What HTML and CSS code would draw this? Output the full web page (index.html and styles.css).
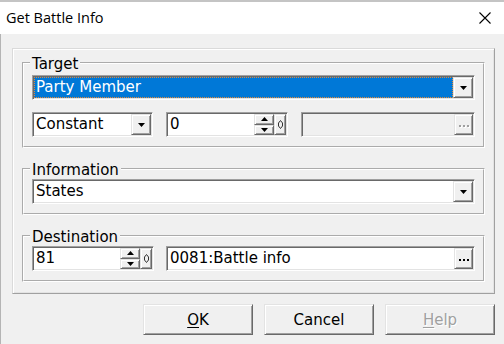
FILE: index.html
```html
<!DOCTYPE html>
<html>
<head>
<meta charset="utf-8">
<link rel="stylesheet" href="styles.css">
</head>
<body>
<div class="window">
  <div class="titlebar">
    <span class="title">Get Battle Info</span>
    <svg class="close" width="12" height="12" viewBox="0 0 12 12"><path d="M0.5 0.5 L11.5 11.5 M11.5 0.5 L0.5 11.5" stroke="#000" stroke-width="1.1" fill="none"/></svg>
  </div>
  <div class="main">
    <div class="panel">
      <fieldset class="group group-target">
        <legend>Target</legend>
        <div class="box">
          <div class="value selected">Party Member</div>
          <div class="btn drop"><svg width="7" height="4" viewBox="0 0 7 4"><polygon points="0,0 7,0 3.5,4" fill="#000"/></svg></div>
        </div>
        <div class="row">
          <div class="box w-const">
            <div class="value">Constant</div>
            <div class="btn drop"><svg width="7" height="4" viewBox="0 0 7 4"><polygon points="0,0 7,0 3.5,4" fill="#000"/></svg></div>
          </div>
          <div class="box w-spin">
            <div class="value">0</div>
            <div class="spins">
              <div class="btn half"><svg width="7" height="4" viewBox="0 0 7 4"><polygon points="0,4 7,4 3.5,0" fill="#000"/></svg></div>
              <div class="btn half"><svg width="7" height="4" viewBox="0 0 7 4"><polygon points="0,0 7,0 3.5,4" fill="#000"/></svg></div>
            </div>
            <div class="btn narrow"><svg width="5" height="9" viewBox="0 0 5 9"><path d="M2.5 0.5 L4.5 3 L4.5 6 L2.5 8.5 L0.5 6 L0.5 3 Z" stroke="#333" stroke-width="1" fill="none"/></svg></div>
          </div>
          <div class="box disabled grow">
            <div class="value"></div>
            <div class="btn dots dim"><i></i><i></i><i></i></div>
          </div>
        </div>
      </fieldset>
      <fieldset class="group spaced">
        <legend>Information</legend>
        <div class="box">
          <div class="value">States</div>
          <div class="btn drop"><svg width="7" height="4" viewBox="0 0 7 4"><polygon points="0,0 7,0 3.5,4" fill="#000"/></svg></div>
        </div>
      </fieldset>
      <fieldset class="group spaced">
        <legend>Destination</legend>
        <div class="row row-dest">
          <div class="box w-spin">
            <div class="value">81</div>
            <div class="spins">
              <div class="btn half"><svg width="7" height="4" viewBox="0 0 7 4"><polygon points="0,4 7,4 3.5,0" fill="#000"/></svg></div>
              <div class="btn half"><svg width="7" height="4" viewBox="0 0 7 4"><polygon points="0,0 7,0 3.5,4" fill="#000"/></svg></div>
            </div>
            <div class="btn narrow"><svg width="5" height="9" viewBox="0 0 5 9"><path d="M2.5 0.5 L4.5 3 L4.5 6 L2.5 8.5 L0.5 6 L0.5 3 Z" stroke="#333" stroke-width="1" fill="none"/></svg></div>
          </div>
          <div class="box grow">
            <div class="value">0081:Battle info</div>
            <div class="btn dots"><i></i><i></i><i></i></div>
          </div>
        </div>
      </fieldset>
    </div>
    <div class="buttons">
      <div class="button"><span><u>O</u>K</span></div>
      <div class="button"><span>Cancel</span></div>
      <div class="button disabled-text"><span><u>H</u>elp</span></div>
    </div>
  </div>
</div>
</body>
</html>
```
FILE: styles.css
```css
html, body {
  margin: 0;
  padding: 0;
}
body {
  width: 504px;
  height: 344px;
  overflow: hidden;
  background: #f0f0f0;
  font-family: "DejaVu Sans", sans-serif;
  font-size: 15px;
  color: #000;
}
.window {
  width: 504px;
  height: 344px;
  display: flex;
  flex-direction: column;
}
.titlebar {
  box-sizing: border-box;
  height: 34px;
  border-top: 2px solid #c4c4c4;
  background: #fff;
  display: flex;
  align-items: center;
  justify-content: space-between;
  padding: 0 13px 2px 6px;
  font-family: "Segoe UI", "Open Sans", sans-serif;
  font-size: 14.5px;
}
.close {
  display: block;
  margin-top: 2px;
}
.main {
  flex: 1;
  border-left: 1px solid #b4b4b4;
}
.panel {
  box-sizing: border-box;
  width: 483px;
  margin: 14px 0 0 11px;
  padding: 4px 9px 11px 9px;
  border: 1px solid;
  border-color: #dadada #a0a0a0 #a0a0a0 #dadada;
  box-shadow: inset 1px 1px 0 #fff, inset -1px -1px 0 #e3e3e3;
}
.group {
  margin: 0;
  padding: 0 8px 9px 8px;
  border: 2px groove #fff;
  min-width: 0;
}
.group-target {
  padding-top: 2px;
}
.spaced {
  margin-top: 11px;
}
.group legend {
  padding: 2px 2px 0 2px;
  margin-left: -2px;
  line-height: 18px;
}
.row {
  display: flex;
  gap: 13px;
  margin-top: 12px;
}
.row-dest {
  margin-top: 0;
  gap: 12px;
}
.box {
  box-sizing: border-box;
  height: 25px;
  display: flex;
  padding: 1px;
  border: 1px solid;
  border-color: #a0a0a0 #fff #fff #a0a0a0;
  box-shadow: inset 1px 1px 0 #696969, inset -1px -1px 0 #e3e3e3;
  background: #fff;
}
.w-const {
  width: 121px;
}
.w-spin {
  width: 122px;
}
.grow {
  flex: 1;
}
.disabled {
  background: #f0f0f0;
}
.value {
  flex: 1;
  min-width: 0;
  padding-left: 2px;
  line-height: 21px;
  white-space: nowrap;
  overflow: hidden;
}
.value.selected {
  background: #0078d7;
  color: #fff;
  border: 1px dotted #e08a3c;
  padding-left: 1px;
  line-height: 19px;
}
.btn {
  box-sizing: border-box;
  background: #f0f0f0;
  border: 1px solid;
  border-color: #e3e3e3 #696969 #696969 #e3e3e3;
  box-shadow: inset 1px 1px 0 #fff, inset -1px -1px 0 #a0a0a0;
  display: flex;
  align-items: center;
  justify-content: center;
}
.btn svg {
  display: block;
}
.drop {
  width: 20px;
}
.spins {
  width: 20px;
  display: flex;
  flex-direction: column;
}
.half {
  flex: 1;
}
.narrow {
  width: 12px;
}
.dots {
  width: 19px;
  gap: 2px;
  padding-top: 3px;
}
.dots i {
  display: block;
  width: 2px;
  height: 2px;
  background: #000;
}
.dots.dim i {
  background: #a0a0a0;
  box-shadow: 1px 1px 0 #fff;
}
.buttons {
  display: flex;
  justify-content: flex-end;
  gap: 11px;
  margin-top: 10px;
  padding-right: 9px;
}
.button {
  box-sizing: border-box;
  width: 110px;
  height: 31px;
  border: 1px solid;
  border-color: #e3e3e3 #696969 #696969 #e3e3e3;
  box-shadow: inset 1px 1px 0 #fff, inset -1px -1px 0 #a0a0a0;
  display: flex;
  align-items: center;
  justify-content: center;
  line-height: 18px;
}
.button u {
  text-decoration-thickness: 1px;
  text-underline-offset: 2px;
}
.disabled-text {
  color: #a0a0a0;
  text-shadow: 1px 1px 0 #fff;
}
```
